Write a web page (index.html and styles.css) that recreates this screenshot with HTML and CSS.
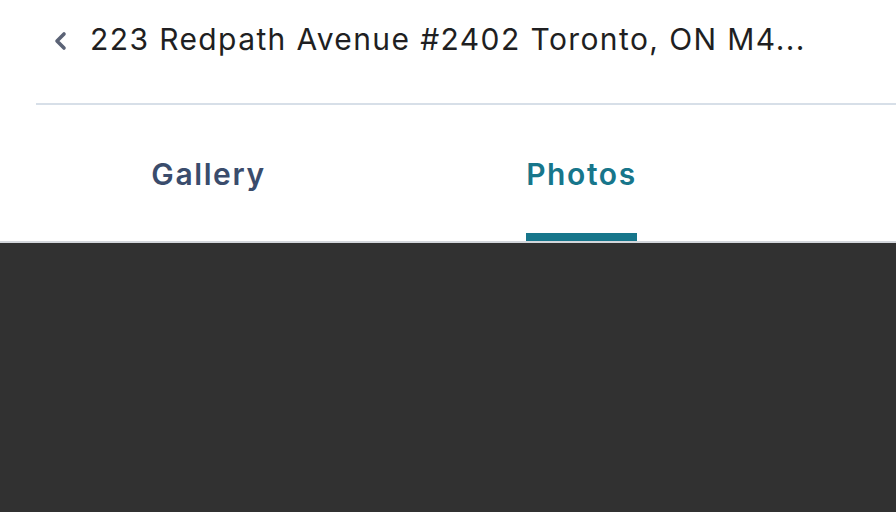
FILE: index.html
```html
<!DOCTYPE html>
<html lang="en">
<head>
    <meta charset="UTF-8">
    <meta name="viewport" content="width=device-width, initial-scale=1.0">
    <title>223 Redpath Avenue - Photos</title>
    <link rel="stylesheet" href="styles.css">
</head>
<body>
    <div class="top-sheet">
        <div class="title-bar">
            <button class="back" aria-label="Back">
                <svg width="14" height="20" viewBox="0 0 14 20">
                    <path d="M10 3 L3 10 L10 17" fill="none" stroke="#5b6376" stroke-width="3.6" stroke-linecap="round" stroke-linejoin="round"/>
                </svg>
            </button>
            <h1 class="address">223 Redpath Avenue #2402 Toronto, ON M4...</h1>
        </div>

        <div class="tabs">
            <button class="tab"><span class="label">Gallery</span></button>
            <button class="tab active"><span class="label">Photos</span></button>
        </div>
    </div>

    <!-- Photo viewer area -->
    <div class="viewer"></div>
</body>
</html>
```

FILE: styles.css
```css
html, body {
    height: 100%;
}

body {
    margin: 0;
    font-family: Inter, "Noto Sans", Arial, sans-serif;
    background-color: #313131;
    display: flex;
    flex-direction: column;
    overflow: hidden;
}

.top-sheet {
    background-color: #fff;
    border-bottom: 2px solid #d3d6db;
}

.title-bar {
    display: flex;
    align-items: flex-start;
    height: 82px;
    margin-left: 36px;
    padding: 21px 0 0 18px;
    border-bottom: 2px solid #d7dfe8;
}

.back {
    border: none;
    background: none;
    padding: 0;
    margin: 10px 22px 0 0;
    width: 14px;
    height: 20px;
    cursor: pointer;
}

.back svg {
    display: block;
}

.address {
    margin: 0;
    font-size: 30px;
    line-height: 36px;
    font-weight: 400;
    color: #1f1f22;
    letter-spacing: 1.4px;
    white-space: nowrap;
}

.tabs {
    display: flex;
    padding-left: 22px;
}

.tab {
    width: 373px;
    border: none;
    background: none;
    padding: 51px 0 0;
    text-align: center;
    font-family: inherit;
    cursor: pointer;
}

.tab .label {
    display: inline-block;
    font-size: 30px;
    line-height: 36px;
    font-weight: 600;
    color: #3a4c6c;
    letter-spacing: 1.6px;
    padding-bottom: 41px;
    border-bottom: 8px solid transparent;
}

.tab.active .label {
    color: #17768b;
    border-bottom-color: #17768b;
}

.viewer {
    flex: 1;
    background-color: #313131;
}
```
